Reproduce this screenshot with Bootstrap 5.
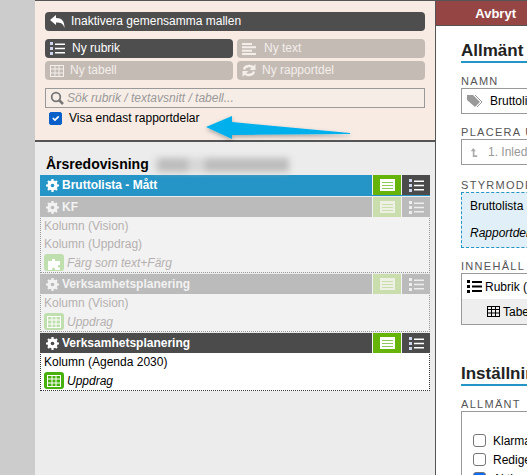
<!doctype html>
<html lang="sv"><head><meta charset="utf-8">
<link href="https://cdn.jsdelivr.net/npm/bootstrap@5.3.0/dist/css/bootstrap.min.css" rel="stylesheet">
<style>
html,body{height:475px;overflow:hidden;background:#ccc;font-family:"Liberation Sans",Arial,sans-serif;font-size:12px;color:#000}
.shell{height:475px;position:relative}
.gutter{width:35px;flex:none;background:#ccc}
.leftp{width:401px;flex:none;background:#ececec;border-right:1px solid #555;height:475px}
.rightp{flex:1;min-width:0;background:#fff;overflow:hidden;height:475px;border-top:1px solid #555}
.topbox{height:142px;background:#f7ebe4;border-top:1px solid #555;border-bottom:2px solid #555;padding:11px 10px 0 10px}
.bar{background:#4e4e4e;color:#fff;border:0;border-radius:4px;height:19px;font-size:12px;line-height:19px;padding:0 5px;gap:6px;font-weight:400;white-space:nowrap}
.bar.off{background:#c4bbb5;color:#f3eeea}
.bar.g7{gap:7px}
.barrow{gap:4px;margin-top:3px}
.barrow .bar{flex:1 1 0}
.firstrow{margin-top:8px}
.searchb{height:20px;margin-top:8px;border:1px solid #999;background:#f7ede7;padding:0 4px;gap:3px;color:#999;font-style:italic;font-size:12px}
.chk{margin-top:4px;padding-left:4px;gap:7px;height:13px}
.chk .form-check-input{width:13px;height:13px;margin:0;border-radius:2px;flex:none;background-color:#0a5fc9;border-color:#0a5fc9}
.chk label{line-height:13px}
.docwrap{padding:15px 5px 0 5px}
.doctitle{font-size:14px;font-weight:700;height:18px;line-height:15px;padding-left:6px;gap:4px}
.smudge{width:136px;height:14px;margin-top:1px;background:linear-gradient(90deg,#e0e0e0 0 4%,#bdbdbd 4% 26%,#d6d6d6 26% 38%,#bdbdbd 38% 100%);filter:blur(3px)}
.sect{border-left:1px dotted #999;border-right:1px dotted #999;border-bottom:1px dotted #999;background:#f2f2f2;margin-bottom:1px}
.sect.act{background:#fff;border-color:#333}
.sect.headonly{border-left:1px solid transparent;border-right:1px solid transparent;border-bottom:0;background:transparent}
.shead{height:20px;margin:0 -1px;background:#bbb;color:#f2f2f2;font-weight:700;font-size:12px;line-height:20px}
.shead.blue{background:#2594c6;color:#fff;height:21px;border-bottom:1px solid #2594c6}
.shead.dark{background:#4b4b4b;color:#fff}
.stitle{flex:1;padding-left:6px;gap:3px;white-space:nowrap}
.sbtn{width:29px;background:#bbb;border-left:1px solid #f2f2f2}
.shead .sbg{background-color:#c9deac}
.shead.blue .sbg,.shead.dark .sbg{background-color:#66b30a}
.shead.blue .sbd,.shead.dark .sbd{background-color:#4b4b4b}
.srow{height:18px;line-height:18px;padding-left:3px;color:#b5b0b0;font-size:12px}
.sect.act .srow{color:#000}
.srow.tb{height:19px;gap:3px;font-style:italic}
.tile{width:20px;height:17px;border-radius:3px;background:#c0dfae;color:#fff}
.sect.act .tile{background:#46b00c}
.redbtn{background:#964545;color:#fff;font-weight:700;font-size:13px;height:25px;line-height:25px;text-align:right;padding-right:11px;border-bottom:1px solid #555}
.formp{padding:0 0 0 25px;width:300px}
.h-sec{font-size:17px;font-weight:700;line-height:19px;border-bottom:2px solid #2594c6;color:#222;height:22px}
.h-one{margin-top:15px;margin-bottom:12px}
.h-two{margin-top:39px;margin-bottom:12px}
.lab{font-size:11px;letter-spacing:1.3px;color:#555;line-height:12px;margin-bottom:1px;white-space:nowrap}
.fbox{border:1px solid #999;height:26px;line-height:24px;padding-left:5px;gap:7px;white-space:nowrap;font-size:12px;margin-bottom:12px}
.fbox.gapped{margin-bottom:14px;gap:10px;color:#999;padding-left:8px}
.dashb{border:1px dashed #2594c6;background:#e1f0f8;height:56px;padding:4px 8px;margin-bottom:12px;white-space:nowrap;font-size:12px}
.rapp{font-style:italic;margin-top:9px}
.inbox{border:1px solid #999;height:52px}
.inrow{height:25px;line-height:24px;padding-left:5px;gap:3px;white-space:nowrap}
.inrow.second{background:#eee;padding-left:25px;height:25px}
.setbox{border:1px solid #999;height:90px;padding:19px 0 0 11px}
.setrow{gap:7px;height:19px;white-space:nowrap}
.setrow .form-check-input{width:13px;height:13px;margin:0;flex:none;border-radius:3px;border-color:#767676}
.arrow{position:absolute;left:200px;top:110px}
</style></head><body>
<div class="shell d-flex">
<div class="gutter"></div>
<div class="leftp">
 <div class="topbox">
  <button class="bar w-100 d-flex align-items-center" type="button"><svg width="15" height="13" viewBox="0 0 15 13"><path fill="#fff" d="M0 5 6 0v3c6 0 8.500 3 8.500 10C13 8.500 11 7.500 6 7.500V10z"/></svg>Inaktivera gemensamma mallen</button>
  <div class="d-flex barrow firstrow">
   <button class="bar g7 d-flex align-items-center" type="button"><svg width="15" height="13" viewBox="0 0 15 13"><path fill="#fff" d="M5 1.500h10V3H5zM5 5.700h10v1.500H5zM5 10h10v1.500H5z"/><path fill="#cfd5ee" d="M0 0h3v3H0zM0 5h3v3H0zM0 10h3v3H0z"/></svg>Ny rubrik</button>
   <button class="bar off g7 d-flex align-items-center" type="button"><svg width="15" height="12" viewBox="0 0 15 12"><path fill="#f3eeea" d="M0 0h10v2H0zM0 3.300h14v2H0zM0 6.700h10v2H0zM0 10h14v2H0z"/></svg>Ny text</button>
  </div>
  <div class="d-flex barrow">
   <button class="bar off d-flex align-items-center" type="button"><svg width="14" height="12" viewBox="0 0 14 12"><rect x=".5" y=".5" width="13" height="11" fill="none" stroke="#f3eeea"/><path stroke="#f3eeea" d="M0 4h14M0 8h14M5 0v12M9 0v12"/></svg>Ny tabell</button>
   <button class="bar off d-flex align-items-center" type="button"><svg width="14" height="13" viewBox="0 0 14 13"><path fill="none" stroke="#f3eeea" stroke-width="2.300" d="M2 5.500C3 1 10 1 12 4.500M12 7.500C11 12 4 12 2 8.500"/><path fill="#f3eeea" d="M13.500 0v6h-6zM.5 13V7h6z"/></svg>Ny rapportdel</button>
  </div>
  <div class="searchb d-flex align-items-center"><svg width="14" height="14" viewBox="0 0 14 14"><circle cx="6" cy="6" r="4.300" fill="none" stroke="#777" stroke-width="1.800"/><path stroke="#777" stroke-width="2.500" d="M9 9l4 4"/></svg><span>Sök rubrik / textavsnitt / tabell...</span></div>
  <div class="chk d-flex align-items-center"><input class="form-check-input" type="checkbox" id="c1" checked><label for="c1">Visa endast rapportdelar</label></div>
 </div>
 <div class="docwrap">
  <div class="doctitle d-flex align-items-start"><span>Årsredovisning</span><span class="smudge"></span></div>

  <div class="sect headonly">
   <div class="shead blue d-flex">
    <div class="stitle d-flex align-items-center"><svg width="13" height="13" viewBox="0 0 13 13"><circle cx="6.500" cy="6.500" r="3.800" fill="none" stroke="#fff" stroke-width="2.600"/><path stroke="#fff" stroke-width="2.200" d="M6.500 0v13M0 6.500h13M2 2l9 9M11 2l-9 9"/><circle cx="6.500" cy="6.500" r="1.800" fill="#2594c6"/></svg>Bruttolista - Mått</div>
    <div class="sbtn sbg d-flex align-items-center justify-content-center"><svg width="15" height="12" viewBox="0 0 15 12"><rect width="15" height="12" fill="#fff"/><path stroke="#8cc95a" d="M2 3.500h11M2 6.500h11M2 9.500h11"/></svg></div>
    <div class="sbtn sbd d-flex align-items-center justify-content-center"><svg width="15" height="13" viewBox="0 0 15 13"><path fill="#fff" d="M5 1.500h10V3H5zM5 5.700h10v1.500H5zM5 10h10v1.500H5z"/><path fill="#cfd5ee" d="M0 0h3v3H0zM0 5h3v3H0zM0 10h3v3H0z"/></svg></div>
   </div>
  </div>

  <div class="sect">
   <div class="shead d-flex">
    <div class="stitle d-flex align-items-center"><svg width="13" height="13" viewBox="0 0 13 13"><circle cx="6.500" cy="6.500" r="3.800" fill="none" stroke="#f2f2f2" stroke-width="2.600"/><path stroke="#f2f2f2" stroke-width="2.200" d="M6.500 0v13M0 6.500h13M2 2l9 9M11 2l-9 9"/><circle cx="6.500" cy="6.500" r="1.800" fill="#bbb"/></svg>KF</div>
    <div class="sbtn sbg d-flex align-items-center justify-content-center"><svg width="15" height="12" viewBox="0 0 15 12"><rect width="15" height="12" fill="#eef0e4"/><path stroke="#c9deac" d="M2 3.500h11M2 6.500h11M2 9.500h11"/></svg></div>
    <div class="sbtn sbd d-flex align-items-center justify-content-center"><svg width="15" height="13" viewBox="0 0 15 13"><path fill="#eee" d="M5 1.500h10V3H5zM5 5.700h10v1.500H5zM5 10h10v1.500H5zM0 0h3v3H0zM0 5h3v3H0zM0 10h3v3H0z"/></svg></div>
   </div>
   <div class="srow">Kolumn (Vision)</div>
   <div class="srow">Kolumn (Uppdrag)</div>
   <div class="srow tb d-flex align-items-center"><span class="tile d-flex align-items-center justify-content-center"><svg width="16" height="14" viewBox="0 0 16 14"><path fill="#fff" d="M2 5h4V3.500a2 2 0 0 1 3 0V5h5v4h-1.500a1.500 1.500 0 0 0 0 2.500H14V14H9v-1a1.500 1.500 0 0 0-3 0v1H2z"/></svg></span><span>Färg som text+Färg</span></div>
  </div>

  <div class="sect">
   <div class="shead d-flex">
    <div class="stitle d-flex align-items-center"><svg width="13" height="13" viewBox="0 0 13 13"><circle cx="6.500" cy="6.500" r="3.800" fill="none" stroke="#f2f2f2" stroke-width="2.600"/><path stroke="#f2f2f2" stroke-width="2.200" d="M6.500 0v13M0 6.500h13M2 2l9 9M11 2l-9 9"/><circle cx="6.500" cy="6.500" r="1.800" fill="#bbb"/></svg>Verksamhetsplanering</div>
    <div class="sbtn sbg d-flex align-items-center justify-content-center"><svg width="15" height="12" viewBox="0 0 15 12"><rect width="15" height="12" fill="#eef0e4"/><path stroke="#c9deac" d="M2 3.500h11M2 6.500h11M2 9.500h11"/></svg></div>
    <div class="sbtn sbd d-flex align-items-center justify-content-center"><svg width="15" height="13" viewBox="0 0 15 13"><path fill="#eee" d="M5 1.500h10V3H5zM5 5.700h10v1.500H5zM5 10h10v1.500H5zM0 0h3v3H0zM0 5h3v3H0zM0 10h3v3H0z"/></svg></div>
   </div>
   <div class="srow">Kolumn (Vision)</div>
   <div class="srow tb d-flex align-items-center"><span class="tile d-flex align-items-center justify-content-center"><svg width="14" height="12" viewBox="0 0 14 12"><rect x=".5" y=".5" width="13" height="11" fill="none" stroke="#fff"/><path stroke="#fff" d="M0 4h14M0 8h14M5 0v12M9 0v12"/></svg></span><span>Uppdrag</span></div>
  </div>

  <div class="sect act">
   <div class="shead dark d-flex">
    <div class="stitle d-flex align-items-center"><svg width="13" height="13" viewBox="0 0 13 13"><circle cx="6.500" cy="6.500" r="3.800" fill="none" stroke="#fff" stroke-width="2.600"/><path stroke="#fff" stroke-width="2.200" d="M6.500 0v13M0 6.500h13M2 2l9 9M11 2l-9 9"/><circle cx="6.500" cy="6.500" r="1.800" fill="#4b4b4b"/></svg>Verksamhetsplanering</div>
    <div class="sbtn sbg d-flex align-items-center justify-content-center"><svg width="15" height="12" viewBox="0 0 15 12"><rect width="15" height="12" fill="#fff"/><path stroke="#8cc95a" d="M2 3.500h11M2 6.500h11M2 9.500h11"/></svg></div>
    <div class="sbtn sbd d-flex align-items-center justify-content-center"><svg width="15" height="13" viewBox="0 0 15 13"><path fill="#fff" d="M5 1.500h10V3H5zM5 5.700h10v1.500H5zM5 10h10v1.500H5z"/><path fill="#cfd5ee" d="M0 0h3v3H0zM0 5h3v3H0zM0 10h3v3H0z"/></svg></div>
   </div>
   <div class="srow">Kolumn (Agenda 2030)</div>
   <div class="srow tb d-flex align-items-center"><span class="tile d-flex align-items-center justify-content-center"><svg width="14" height="12" viewBox="0 0 14 12"><rect x=".5" y=".5" width="13" height="11" fill="none" stroke="#fff"/><path stroke="#fff" d="M0 4h14M0 8h14M5 0v12M9 0v12"/></svg></span><span>Uppdrag</span></div>
  </div>
 </div>
</div>
<div class="rightp">
 <div class="redbtn">Avbryt</div>
 <div class="formp">
  <div class="h-sec h-one">Allmänt</div>
  <div class="lab">NAMN</div>
  <div class="fbox d-flex align-items-center"><svg width="16" height="14" viewBox="0 0 16 14"><path fill="#999" d="M0 1h6l7 7-5 5-8-7z"/><path fill="none" stroke="#999" d="M8 1l7 7-5 5"/></svg><span>Bruttolista - Mått</span></div>
  <div class="lab">PLACERA UNDER</div>
  <div class="fbox gapped d-flex align-items-center"><svg width="8" height="13" viewBox="0 0 10 13"><path fill="#aaa" d="M4 1l3.500 4H5.500v5H9v2H3.500V5H1z"/></svg><span>1. Inledning</span></div>
  <div class="lab">STYRMODELL</div>
  <div class="dashb">Bruttolista - Mått<div class="rapp">Rapportdel</div></div>
  <div class="lab">INNEHÅLL</div>
  <div class="inbox">
   <div class="inrow d-flex align-items-center"><svg width="15" height="13" viewBox="0 0 15 13"><path fill="#000" d="M5 1h10v2H5zM5 5.500h10v2H5zM5 10h10v2H5zM0 0h3v3H0zM0 5h3v3H0zM0 10h3v3H0z"/></svg><span>Rubrik (Verksamhetsplanering)</span></div>
   <div class="inrow second d-flex align-items-center"><svg width="13" height="11" viewBox="0 0 13 11"><rect x=".5" y=".5" width="12" height="10" fill="none" stroke="#000"/><path stroke="#000" d="M0 3.500h13M0 7h13M4.500 0v11M8.500 0v11"/></svg><span>Tabell</span></div>
  </div>
  <div class="h-sec h-two">Inställningar</div>
  <div class="lab">ALLMÄNT</div>
  <div class="setbox">
   <div class="setrow d-flex align-items-center"><input class="form-check-input" type="checkbox"><span>Klarmarkering</span></div>
   <div class="setrow d-flex align-items-center"><input class="form-check-input" type="checkbox"><span>Redigerbar</span></div>
   <div class="setrow d-flex align-items-center"><input class="form-check-input" type="checkbox" checked><span>Aktiv</span></div>
  </div>
 </div>
</div>
<svg class="arrow" width="160" height="36" viewBox="0 0 160 36"><defs><filter id="sh"><feDropShadow dx="0" dy="2" stdDeviation="2" flood-color="#000" flood-opacity=".3"/></filter></defs><path fill="#00b0ec" filter="url(#sh)" d="M6 17 32 6v6l118 11v1L32 25v4z"/></svg>
</div>
</body></html>
